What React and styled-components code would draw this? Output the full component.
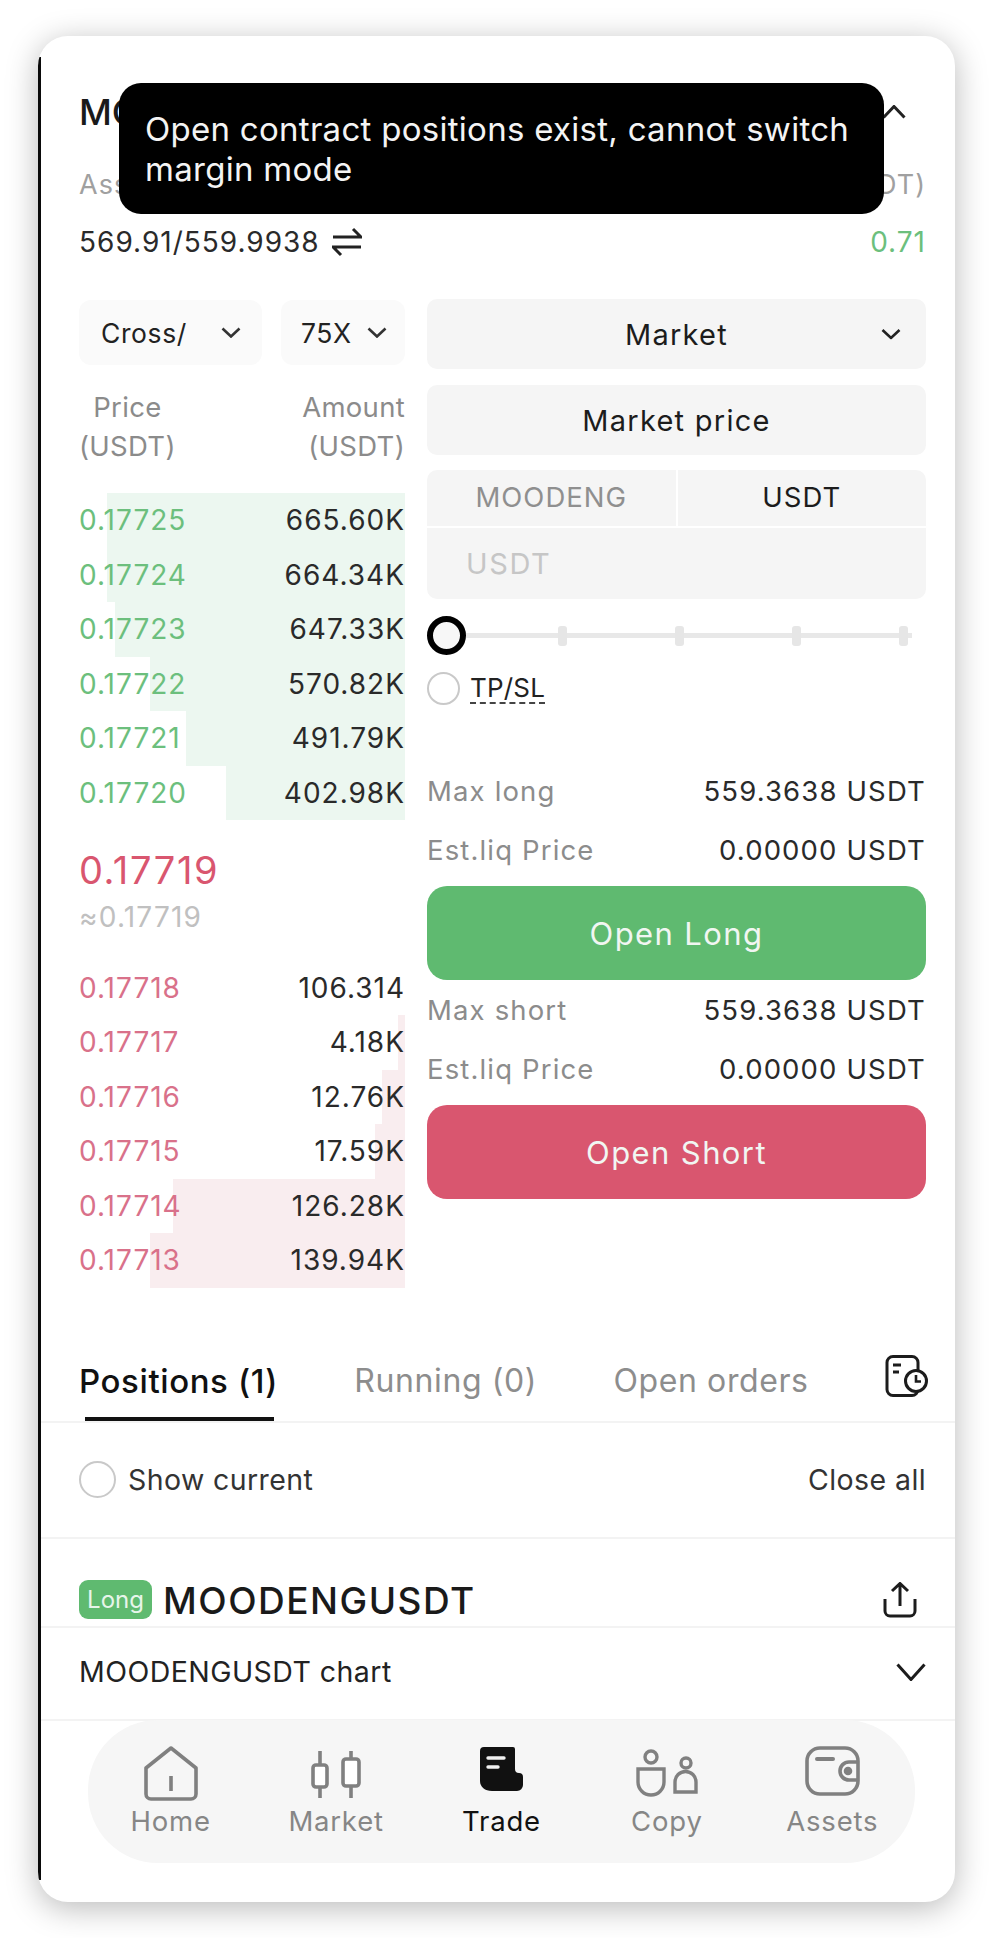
import React from "react";
import styled, { createGlobalStyle } from "styled-components";

const Global = createGlobalStyle`
  html, body { margin: 0; padding: 0; background: #fff; }
  body { font-family: Inter, "Liberation Sans", sans-serif; color: #1a1a1a; }
  * { box-sizing: border-box; }
`;
const Page = styled.div`width: 992px; height: 1938px; padding: 36px 37px 36px 38px; overflow: hidden;`;
const Card = styled.div`
  position: relative; width: 917px; height: 1866px; background: #fff;
  border-radius: 30px; box-shadow: 0 6px 32px rgba(0,0,0,.28); overflow: hidden;
  &::before { content: ""; position: absolute; left: 0; top: 21px; bottom: 22px; width: 3px; background: #0a0a0a; }
`;
const Section = styled.div`padding: 0 29px 0 41px;`;
const Toast = styled.div`
  position: absolute; left: 81px; top: 47px; width: 765px; height: 131px; z-index: 2;
  background: #000; color: #f4f4f4; border-radius: 22px; padding: 26px 26px;
  font-size: 33px; line-height: 40px; letter-spacing: .28px;
`;
const TitleRow = styled.div`display: flex; justify-content: space-between; align-items: center; height: 50px; margin-top: 51px; font-size: 36px; font-weight: 500; padding-right: 20px;`;
const InfoRow = styled.div`display: flex; justify-content: space-between; align-items: center; height: 36px; margin-top: ${p => p.$mt}px; font-size: ${p => p.$fs}px; letter-spacing: 1px; color: ${p => p.$c};`;
const Swap = styled.span`display: inline-flex; align-items: center; gap: 12px;`;
const Grid = styled.div`display: grid; grid-template-columns: 326px 499px; column-gap: 22px; padding: 0 29px 0 41px; margin-top: 39px;`;
const Col = styled.div`display: flex; flex-direction: column;`;
const Selects = styled.div`display: flex; gap: 19px; margin-top: 1px; height: 65px;`;
const Select = styled.div`
  width: ${p => p.$w}px; display: flex; align-items: center; justify-content: space-between;
  padding: 0 ${p => p.$pr}px 0 ${p => p.$pl}px; background: #fafafa; border-radius: 12px;
  font-size: 26.500px; letter-spacing: .6px; color: #222;
`;
const BookHead = styled.div`display: flex; justify-content: space-between; margin-top: 23px; font-size: 27.500px; line-height: 39px; color: #8b8b8b; letter-spacing: .3px;`;
const HeadCell = styled.div`text-align: ${p => p.$a};`;
const Rows = styled.div`margin-top: ${p => p.$mt}px;`;
const Row = styled.div`
  height: 54.5px; display: flex; justify-content: space-between; align-items: center;
  font-size: 28px; letter-spacing: 1px; color: #2a2a2a;
  background: linear-gradient(to left, ${p => p.$band} ${p => p.$fill}px, transparent ${p => p.$fill}px);
`;
const Price = styled.span`color: ${p => p.$c};`;
const Last = styled.div`margin-top: 25px; height: 50px; line-height: 50px; font-size: 38px; color: #d9566f; letter-spacing: 1.6px;`;
const Approx = styled.div`margin-top: 5px; height: 34px; line-height: 34px; font-size: 28px; color: #c0c0c0; letter-spacing: 1.200px;`;
const Field = styled.div`
  position: relative; height: 70px; margin-top: ${p => p.$mt}px; background: #f5f5f5; border-radius: 10px;
  display: flex; align-items: center; justify-content: center; font-size: 29px; letter-spacing: 1.25px; color: #1c1c1c;
`;
const FieldChevron = styled.span`position: absolute; right: 25px; top: 50%; transform: translateY(-50%); display: flex;`;
const InputGroup = styled.div`margin-top: 15px; height: 129px; background: #f5f5f5; border-radius: 10px; overflow: hidden; display: flex; flex-direction: column;`;
const Units = styled.div`display: flex; height: 58px; border-bottom: 2px solid #fff;`;
const Unit = styled.div`
  flex: 1; display: flex; align-items: center; justify-content: center; font-size: 27.500px; letter-spacing: 1px; padding-bottom: 2px;
  color: ${p => p.$c}; border-right: ${p => p.$div ? "2px solid #fff" : "none"};
`;
const Placeholder = styled.div`flex: 1; display: flex; align-items: center; padding-left: 39px; font-size: 29px; letter-spacing: 1.6px; color: #c6c6c6;`;
const Slider = styled.div`display: flex; align-items: center; height: 39px; margin-top: 17px; width: 485px;`;
const Thumb = styled.div`width: 39px; height: 39px; flex: none; border: 6px solid #000; border-radius: 50%; background: #f7f7f7;`;
const Track = styled.div`flex: 1; height: 5px; background: #e8e8e8; display: flex; gap: 108px; align-items: center; padding-left: 92px;`;
const Tick = styled.div`width: 9px; height: 20px; flex: none; border-radius: 3px; background: #e6e6e6; &:last-child { margin-left: -10px; }`;
const RadioRow = styled.div`display: flex; align-items: center; gap: ${p => p.$gap}px; margin-top: ${p => p.$mt}px; font-size: ${p => p.$fs}px;`;
const Radio = styled.div`width: ${p => p.$d}px; height: ${p => p.$d}px; border: 2px solid #c9c9c9; border-radius: 50%; background: #fff; flex: none;`;
const Dashed = styled.span`border-bottom: 2px dashed #444; line-height: 29px; color: #222; letter-spacing: .2px;`;
const Spacer = styled.div`height: 56px;`;
const Stat = styled.div`display: flex; justify-content: space-between; align-items: center; height: 59px; font-size: 27.500px; letter-spacing: 1.15px; color: #2a2a2a;`;
const StatLabel = styled.span`color: #8c8c8c;`;
const Action = styled.div`
  height: 94px; margin-top: ${p => p.$mt}px; border-radius: 20px; background: ${p => p.$bg}; color: #f1f6f2;
  display: flex; align-items: center; justify-content: center; font-size: 31px; letter-spacing: 1.4px;
`;
const Tabs = styled.div`
  margin-top: 57px; height: 78px; border-bottom: 2px solid #f3f3f3; padding: 0 27px 0 41px;
  display: flex; justify-content: space-between; align-items: flex-start;
`;
const Tab = styled.div`
  position: relative; height: 76px; padding-bottom: 4px; display: flex; align-items: center; letter-spacing: .6px;
  font-size: ${p => p.$on ? 33 : 32}px;
  font-weight: ${p => p.$on ? 500 : 400}; color: ${p => p.$on ? "#111" : "#8d8d8d"};
  ${p => p.$on && `&::after { content: ""; position: absolute; left: 6px; right: 4px; bottom: 0; height: 4px; background: #111; }`}
`;
const TabIcon = styled.div`padding-top: 10px;`;
const ToggleRow = styled(Section)`height: 116px; border-bottom: 2px solid #f3f3f3; display: flex; align-items: center; justify-content: space-between; font-size: 28.500px; color: #333; letter-spacing: .4px;`;
const Shown = styled.div`display: flex; align-items: center; gap: 12px;`;
const PosHead = styled(Section)`height: 89px; padding-top: 41px; border-bottom: 2px solid #f3f3f3; display: flex; align-items: flex-start; gap: 11px;`;
const Badge = styled.div`width: 73px; height: 39px; background: #5fba70; border-radius: 9px; color: #e7f5ea; font-size: 24px; display: flex; align-items: center; justify-content: center;`;
const Symbol = styled.div`flex: 1; height: 39px; line-height: 41px; font-size: 37px; font-weight: 500; letter-spacing: 1.5px; color: #1a1a1a;`;
const ShareWrap = styled.div`margin-top: 2px; margin-right: 9px;`;
const ChartRow = styled(Section)`height: 93px; padding-bottom: 3px; border-bottom: 2px solid #f3f3f3; display: flex; align-items: center; justify-content: space-between; font-size: 28.500px; letter-spacing: .45px; color: #222;`;
const Nav = styled.div`
  margin: -1px 0 0 50px; width: 827px; height: 143px; background: #f6f6f6; border-radius: 70px;
  display: grid; grid-template-columns: repeat(5, 1fr); padding-top: 26px;
`;
const NavItem = styled.div`display: flex; flex-direction: column; align-items: center; font-size: 27.500px; letter-spacing: .8px; color: ${p => p.$on ? "#111" : "#868686"};`;
const NavIcon = styled.div`height: 56px; display: flex; align-items: flex-start; justify-content: center;`;
const NavLabel = styled.div`margin-top: 4px; line-height: 30px;`;

const Chevron = ({ w = 20, h = 11, up, c = "#333", sw = 2.6 }) => (
  <svg width={w} height={h} viewBox={`0 0 ${w} ${h}`} fill="none">
    <path d={up ? `M1.5 ${h - 1.5}L${w / 2} 1.5L${w - 1.5} ${h - 1.5}` : `M1.5 1.5L${w / 2} ${h - 1.5}L${w - 1.5} 1.5`} stroke={c} strokeWidth={sw} />
  </svg>
);
const SwapIcon = () => (
  <svg width="30" height="30" viewBox="0 0 30 30" fill="none" stroke="#222" strokeWidth="3">
    <path d="M1 10H29L21 2" /><path d="M29 20H1L9 28" />
  </svg>
);
const HistoryIcon = () => (
  <svg width="43" height="43" viewBox="0 0 43 43" fill="none" stroke="#1c1c1c" strokeWidth="3">
    <rect x="2" y="1.5" width="31" height="39" rx="6" />
    <path d="M8 10h8M8 17h6" />
    <circle cx="31" cy="26" r="10.500" fill="#fff" />
    <path d="M31 20v6.500h5" strokeWidth="2.600" />
  </svg>
);
const ShareIcon = () => (
  <svg width="34" height="36" viewBox="0 0 34 36" fill="none" stroke="#1c1c1c" strokeWidth="3">
    <path d="M17 24V2M9 9l8-7.500L25 9" />
    <path d="M2 17v12a5 5 0 0 0 5 5h20a5 5 0 0 0 5-5V17" />
  </svg>
);
const G = "#808080";
const HomeIcon = () => (
  <svg width="54" height="55" viewBox="0 0 54 55" fill="none" stroke={G} strokeWidth="3.600" strokeLinejoin="round">
    <path d="M27 2L52 22V48a5 5 0 0 1-5 5H7a5 5 0 0 1-5-5V22Z" />
    <path d="M27 30V45" />
  </svg>
);
const MarketIcon = () => (
  <svg width="50" height="50" viewBox="0 0 50 50" fill="none" stroke={G} strokeWidth="3.600" style={{ marginTop: 4 }}>
    <path d="M9 1V15M9 37V48M40 1V9M40 36V48" />
    <rect x="2" y="15" width="14" height="22" rx="3" fill="#fff" />
    <rect x="32" y="9" width="16" height="27" rx="3" fill="#fff" />
  </svg>
);
const TradeIcon = () => (
  <svg width="43" height="44" viewBox="0 0 43 44" style={{ marginTop: 1 }}>
    <path d="M4 0H33a2 2 0 0 1 2 2V22a4 4 0 0 0 4 4a4 4 0 0 1 4 4V38a6 6 0 0 1-6 6H12C5 44 0 40 0 34V4a4 4 0 0 1 4-4Z" fill="#111" />
    <path d="M8 11H24M8 20H18" stroke="#f0f0f0" strokeWidth="3.400" strokeLinecap="round" />
  </svg>
);
const CopyIcon = () => (
  <svg width="62" height="48" viewBox="0 0 62 48" fill="none" stroke={G} strokeWidth="3.400" style={{ marginTop: 3 }}>
    <circle cx="15" cy="8" r="6" />
    <path d="M2 20H28V33a13 13 0 0 1-26 0Z" />
    <circle cx="50" cy="14" r="5" />
    <path d="M39 43V33a10.500 10.500 0 0 1 21 0V43Z" />
  </svg>
);
const AssetsIcon = () => (
  <svg width="55" height="50" viewBox="0 0 55 50" fill="none" stroke={G} strokeWidth="3.600">
    <rect x="2" y="2" width="51" height="46" rx="13" />
    <path d="M12 13H28" strokeWidth="4" strokeLinecap="round" />
    <path d="M53 16H44a9 9 0 0 0 0 18H53" />
    <circle cx="43" cy="25" r="2.500" fill={G} />
  </svg>
);

const BIDS = [["0.17725", "665.60K", 298], ["0.17724", "664.34K", 298], ["0.17723", "647.33K", 290], ["0.17722", "570.82K", 255], ["0.17721", "491.79K", 219], ["0.17720", "402.98K", 179]];
const ASKS = [["0.17718", "106.314", 0], ["0.17717", "4.18K", 7], ["0.17716", "12.76K", 23], ["0.17715", "17.59K", 30], ["0.17714", "126.28K", 232], ["0.17713", "139.94K", 255]];
const NAV = [["Home", HomeIcon], ["Market", MarketIcon], ["Trade", TradeIcon, true], ["Copy", CopyIcon], ["Assets", AssetsIcon]];

const Stats = ({ label, value }) => (
  <>
    <Stat><StatLabel>{label}</StatLabel><span>{value} USDT</span></Stat>
    <Stat><StatLabel>Est.liq Price</StatLabel><span>0.00000 USDT</span></Stat>
  </>
);

export default function App() {
  return (
    <Page>
      <Global />
      <Card>
        <Toast>Open contract positions exist, cannot switch margin mode</Toast>
        <Section>
          <TitleRow><span>MOODENGUSDT</span><Chevron w={24} h={14} up c="#222" sw={3} /></TitleRow>
          <InfoRow $mt={29} $fs={27} $c="#a0a0a0"><span>Assets (USDT)</span><span>PNL (USDT)</span></InfoRow>
          <InfoRow $mt={22} $fs={28} $c="#2a2a2a"><Swap>569.91/559.9938 <SwapIcon /></Swap><Price $c="#6cbf7d">0.71</Price></InfoRow>
        </Section>
        <Grid>
          <Col>
            <Selects>
              <Select $w={183} $pl={22} $pr={21}>Cross/<Chevron /></Select>
              <Select $w={124} $pl={20} $pr={18}>75X<Chevron /></Select>
            </Selects>
            <BookHead>
              <HeadCell $a="center">Price<br />(USDT)</HeadCell>
              <HeadCell $a="right">Amount<br />(USDT)</HeadCell>
            </BookHead>
            <Rows $mt={27}>
              {BIDS.map(([p, a, f]) => (
                <Row key={p} $band="#ecf7f0" $fill={f}><Price $c="#6cbf7d">{p}</Price><span>{a}</span></Row>
              ))}
            </Rows>
            <Last>0.17719</Last>
            <Approx>≈0.17719</Approx>
            <Rows $mt={26.500}>
              {ASKS.map(([p, a, f]) => (
                <Row key={p} $band="#f9edef" $fill={f}><Price $c="#d9718a">{p}</Price><span>{a}</span></Row>
              ))}
            </Rows>
          </Col>
          <Col>
            <Field $mt={0}>Market<FieldChevron><Chevron c="#222" /></FieldChevron></Field>
            <Field $mt={16}>Market price</Field>
            <InputGroup>
              <Units>
                <Unit $div $c="#8f8f8f">MOODENG</Unit>
                <Unit $c="#1c1c1c">USDT</Unit>
              </Units>
              <Placeholder>USDT</Placeholder>
            </InputGroup>
            <Slider>
              <Thumb />
              <Track><Tick /><Tick /><Tick /><Tick /></Track>
            </Slider>
            <RadioRow $gap={10} $mt={17} $fs={26}><Radio $d={33} /><Dashed>TP/SL</Dashed></RadioRow>
            <Spacer />
            <Stats label="Max long" value="559.3638" />
            <Action $bg="#5fba70" $mt={7}>Open Long</Action>
            <Stats label="Max short" value="559.3638" />
            <Action $bg="#d9566f" $mt={7}>Open Short</Action>
          </Col>
        </Grid>
        <Tabs>
          <Tab $on>Positions (1)</Tab>
          <Tab>Running (0)</Tab>
          <Tab>Open orders</Tab>
          <TabIcon><HistoryIcon /></TabIcon>
        </Tabs>
        <ToggleRow>
          <Shown><Radio $d={37} />Show current</Shown>
          <span>Close all</span>
        </ToggleRow>
        <PosHead>
          <Badge>Long</Badge>
          <Symbol>MOODENGUSDT</Symbol>
          <ShareWrap><ShareIcon /></ShareWrap>
        </PosHead>
        <ChartRow>
          <span>MOODENGUSDT chart</span>
          <Chevron w={30} h={18} c="#1c1c1c" sw={3} />
        </ChartRow>
        <Nav>
          {NAV.map(([label, Icon, on]) => (
            <NavItem key={label} $on={on}>
              <NavIcon><Icon /></NavIcon>
              <NavLabel>{label}</NavLabel>
            </NavItem>
          ))}
        </Nav>
      </Card>
    </Page>
  );
}
